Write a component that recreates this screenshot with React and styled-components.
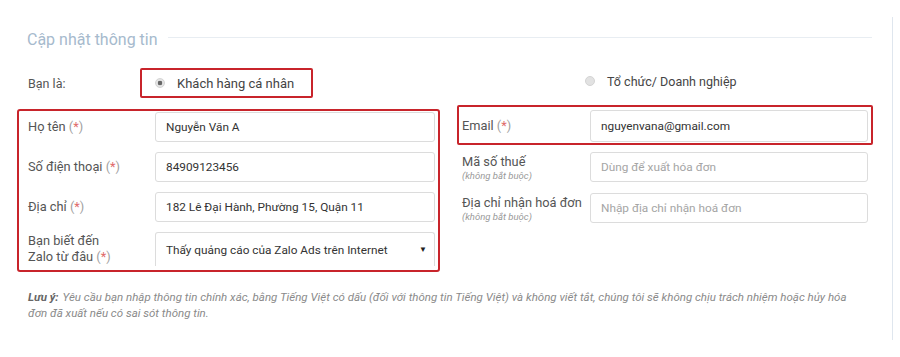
import React from 'react'
import styled, { createGlobalStyle } from 'styled-components';

const GlobalStyle = createGlobalStyle`
  body {
    margin: 0;
    background: #fff;
    font-family: Roboto, "Liberation Sans", Arial, sans-serif;
    color: #555;
  }
  * { box-sizing: border-box; }
`;

const Page = styled.div`
  width: 900px;
  height: 357px;
  padding-top: 17px;
  background: #fff;
`;

const Panel = styled.div`
  width: 893px;
  height: 323px;
  border-right: 1px solid #dfe6ee;
  padding: 13px 19px 0 17px;
`;

const Header = styled.div`
  display: flex;
  align-items: flex-start;
  height: 20px;
  margin-left: 10px;
`;

const Title = styled.div`
  font-size: 16px;
  line-height: 20px;
  color: #a6bacd;
`;

const TitleLine = styled.div`
  flex: 1;
  height: 1px;
  margin: 7px 1px 0 10px;
  background: #e8edf2;
`;

const TypeRow = styled.div`
  display: grid;
  grid-template-columns: 423px 416px;
  column-gap: 17px;
  margin-top: 18px;
  height: 30px;
`;

const TypeCell = styled.div`
  display: flex;
  align-items: center;
  padding-left: ${p => p.$indent || 0}px;
`;

const TypeLabel = styled.div`
  width: 112px;
  margin-left: 11px;
  font-size: 12.5px;
  color: #555;
`;

const Option = styled.div`
  display: flex;
  align-items: center;
  gap: 12px;
  height: 30px;
  width: ${p => (p.$boxed ? '173px' : 'auto')};
  padding-left: ${p => (p.$boxed ? '13px' : '0')};
  border: ${p => (p.$boxed ? '2px solid #c8242b' : 'none')};
  border-radius: 2px;
  margin-top: ${p => p.$lift || 0}px;
  font-size: ${p => p.$size || 13}px;
  color: #444;
`;

const Radio = styled.span`
  width: 10px;
  height: 10px;
  border-radius: 50%;
  background: ${p => (p.$checked ? 'radial-gradient(circle, #666 0 2px, #e4e4e4 2.6px)' : '#e2e2e2')};
  border: 1px solid #d4d4d4;
  flex: none;
`;

const FormGrid = styled.div`
  display: grid;
  grid-template-columns: 423px 416px;
  column-gap: 17px;
  margin-top: 7px;
  align-items: start;
`;

const LeftBox = styled.div`
  margin-top: 4px;
  height: 163px;
  border: 2px solid #c8242b;
  border-radius: 3px;
  padding: 1px 3px 0 9px;
  display: flex;
  flex-direction: column;
  gap: 10px;
`;

const RightCol = styled.div`
  display: flex;
  flex-direction: column;
`;

const EmailBox = styled.div`
  height: 40px;
  border: 2px solid #c8242b;
  border-radius: 2px;
  padding: 3px 3px 0 3px;
`;

const RightRows = styled.div`
  display: flex;
  flex-direction: column;
  gap: 11px;
  margin-top: 7px;
  padding: 0 5px;
`;

const Row = styled.div`
  display: flex;
  align-items: center;
  height: ${p => p.$h || 30}px;
`;

const Label = styled.div`
  width: ${p => p.$w || 127}px;
  flex: none;
  font-size: 12.8px;
  line-height: 16px;
  color: #555;
`;

const Sub = styled.div`
  font-size: 9.5px;
  line-height: 11px;
  font-style: italic;
  color: #999;
`;

const Req = styled.span`
  color: #a0a0a0;
  & b {
    font-weight: normal;
    color: #e06a6a;
  }
`;

const Input = styled.input`
  flex: 1;
  min-width: 0;
  height: ${p => p.$h || 30}px;
  border: 1px solid #dcdcdc;
  border-radius: 3px;
  padding: 0 10px;
  font-family: Roboto, "Liberation Sans", Arial, sans-serif;
  font-size: 11.8px;
  color: #333;
  background: #fff;
  outline: none;
  &::placeholder {
    color: #a5a5a5;
  }
`;

const Select = styled.div`
  flex: 1;
  height: 34px;
  border: 1px solid #dcdcdc;
  border-bottom: none;
  border-radius: 3px 3px 0 0;
  padding: 0 7px 0 10px;
  display: flex;
  align-items: center;
  justify-content: space-between;
  font-size: 11.8px;
  color: #333;
`;

const Caret = styled.span`
  font-size: 8px;
  color: #222;
`;

const Note = styled.div`
  margin: 17px 0 0 11px;
  width: 832px;
  font-size: 11.5px;
  line-height: 16px;
  font-style: italic;
  color: #8a8a8a;
  & b {
    display: inline-block;
    color: #666;
    margin-right: 4px;
  }
`;

const Required = () => (
  <Req>(<b>*</b>)</Req>
);

const App = () => {
  return (
    <Page>
      <GlobalStyle />
      <Panel>
        <Header>
          <Title>Cập nhật thông tin</Title>
          <TitleLine />
        </Header>

        <TypeRow>
          <TypeCell>
            <TypeLabel>Bạn là:</TypeLabel>
            <Option $boxed>
              <Radio $checked />
              Khách hàng cá nhân
            </Option>
          </TypeCell>
          <TypeCell $indent={128}>
            <Option $lift={-4} $size={12.5}>
              <Radio />
              Tổ chức/ Doanh nghiệp
            </Option>
          </TypeCell>
        </TypeRow>

        <FormGrid>
          <LeftBox>
            <Row>
              <Label>Họ tên <Required /></Label>
              <Input defaultValue="Nguyễn Văn A" />
            </Row>
            <Row>
              <Label>Số điện thoại <Required /></Label>
              <Input defaultValue="84909123456" />
            </Row>
            <Row>
              <Label>Địa chỉ <Required /></Label>
              <Input defaultValue="182 Lê Đại Hành, Phường 15, Quận 11" />
            </Row>
            <Row $h={34}>
              <Label>Bạn biết đến<br />Zalo từ đâu <Required /></Label>
              <Select>
                <span>Thấy quảng cáo của Zalo Ads trên Internet</span>
                <Caret>▼</Caret>
              </Select>
            </Row>
          </LeftBox>

          <RightCol>
            <EmailBox>
              <Row $h={32}>
                <Label $w={128}>Email <Required /></Label>
                <Input $h={32} defaultValue="nguyenvana@gmail.com" />
              </Row>
            </EmailBox>
            <RightRows>
              <Row>
                <Label $w={128}>
                  Mã số thuế
                  <Sub>(không bắt buộc)</Sub>
                </Label>
                <Input placeholder="Dùng để xuất hóa đơn" />
              </Row>
              <Row>
                <Label $w={128}>
                  Địa chỉ nhận hoá đơn
                  <Sub>(không bắt buộc)</Sub>
                </Label>
                <Input placeholder="Nhập địa chỉ nhận hoá đơn" />
              </Row>
            </RightRows>
          </RightCol>
        </FormGrid>

        <Note>
          <b>Lưu ý:</b>Yêu cầu bạn nhập thông tin chính xác, bằng Tiếng Việt có dấu (đối với thông tin Tiếng Việt) và không viết tắt, chúng tôi sẽ không chịu trách nhiệm hoặc hủy hóa đơn đã xuất nếu có sai sót thông tin.
        </Note>
      </Panel>
    </Page>
  )
}

export default App
